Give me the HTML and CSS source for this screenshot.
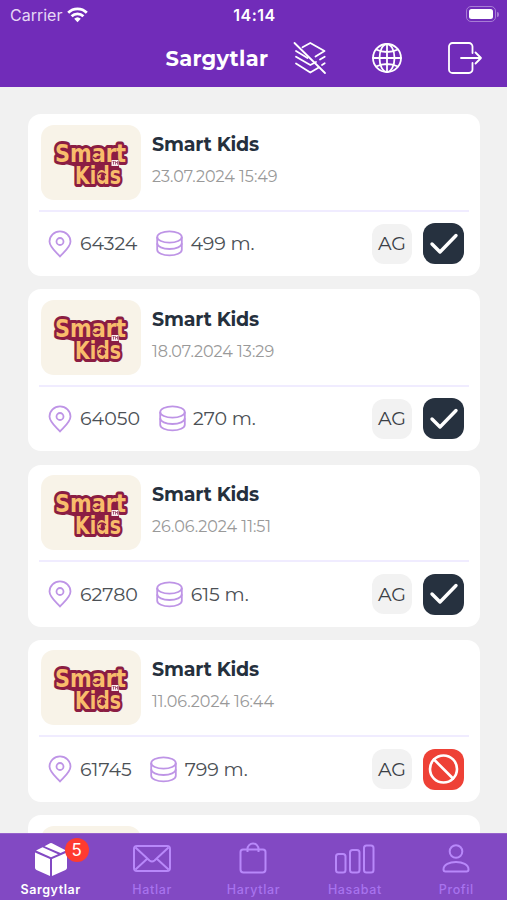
FILE: index.html
```
<!DOCTYPE html>
<html lang="tk">

<head>
    <meta charset="utf-8">
    <meta name="viewport" content="width=device-width, initial-scale=1">
    <title>Sargytlar</title>
    <link rel="stylesheet" href="styles.css">
</head>

<body>
    <svg class="defs">
        <symbol id="logo" viewBox="0 0 100 75">
            <path d="M16 20h12l14 2h40v14l-4 4v17H36V42L17 37Z" fill="#8b1d43" />
            <g class="logo-text">
                <text x="34" y="58.500" font-size="24" textLength="46" lengthAdjust="spacingAndGlyphs">Kids</text>
                <text x="14" y="36.500" font-size="25" textLength="71" lengthAdjust="spacingAndGlyphs">Smart</text>
            </g>
            <g fill="none" stroke="#8b1d43" stroke-width="1.2">
                <path d="M51 29q4-4 8 0M52 32q3 3 6 0M57 50q4-4 8 0M58 53q3 3 6 0" />
            </g>
            <rect x="70.500" y="35" width="7" height="6" fill="#f9eef0" />
            <path d="M71.500 36.500h2.200M72.500 36.500v3M74.500 39.500v-3l1 1.300 1-1.300v3" fill="none" stroke="#8b1d43" stroke-width=".7" />
        </symbol>
        <symbol id="pin" viewBox="0 0 24 28">
            <path d="M12 26.500C8 22 1.500 17 1.500 11.500a10.500 10.200 0 0 1 21 0C22.500 17 16 22 12 26.500Z" />
            <circle cx="12" cy="11.500" r="3.500" />
        </symbol>
        <symbol id="coins" viewBox="0 0 27 27">
            <ellipse cx="13.500" cy="7" rx="12.300" ry="5.700" />
            <path d="M1.200 7v6.300c0 3.200 5.500 5.700 12.300 5.700s12.300-2.500 12.300-5.700V7" />
            <path d="M1.200 13.300v6.400c0 3.200 5.500 5.700 12.300 5.700s12.300-2.500 12.300-5.700v-6.400" />
        </symbol>
        <symbol id="check" viewBox="0 0 40 40">
            <path d="M8 20l8 8L32 11.500" />
        </symbol>
        <symbol id="ban" viewBox="0 0 40 40">
            <circle cx="19.500" cy="20" r="13.500" />
            <path d="M10 10.500l19 19" />
        </symbol>
    </svg>

    <header>
        <div class="status-bar">
            <div class="carrier">Carrier
                <svg width="21" height="16" viewBox="0 0 21 16" stroke="#fff" stroke-width="2.800">
                    <path d="M1.200 5.800a13.200 13.200 0 0 1 18.600 0M4.600 9.300a8.400 8.400 0 0 1 11.800 0" />
                    <path class="solid" d="M10.500 15.200L7.200 11.800a4.800 4.800 0 0 1 6.600 0Z" />
                </svg>
            </div>
            <div class="clock">14:14</div>
            <div class="battery-wrap"><span class="battery"><i></i></span><span class="battery-tip"></span></div>
        </div>
        <div class="nav-bar">
            <h1>Sargytlar</h1>
            <svg class="nav-layers" width="34" height="34" viewBox="0 0 34 34">
                <path d="M9.500 6.300L17.300 2l14.200 8-9 5.500M3 10l11.500 7" />
                <path d="M3 15.700L17.300 24l5.700-3M31.700 15.700l-4.700 2.800M3 22.500l14.300 9 8-4.700M31.700 22.300l-2.700 1.700" />
                <path d="M1.500 2l30.500 30" />
            </svg>
            <svg class="nav-globe" width="32" height="32" viewBox="0 0 32 32">
                <circle cx="16" cy="16" r="14" />
                <ellipse cx="16" cy="16" rx="7.500" ry="14" />
                <path d="M16 2v28M2 16h28M5 7.500q11 5 22 0M5 24.500q11-5 22 0" />
            </svg>
            <svg class="nav-exit" width="36" height="34" viewBox="0 0 36 34">
                <path d="M25.500 12V5.500a3.500 3.500 0 0 0-3.500-3.500H5.500A3.500 3.500 0 0 0 2 5.500v23A3.500 3.500 0 0 0 5.500 32H22a3.500 3.500 0 0 0 3.500-3.500V22" />
                <path d="M14 17h20M28.500 11.500l5.500 5.500-5.500 5.500" />
            </svg>
        </div>
    </header>

    <main>
        <div class="card">
            <div class="shop">
                <svg class="thumb"><use href="#logo" /></svg>
                <div>
                    <h2>Smart Kids</h2>
                    <p>23.07.2024 15:49</p>
                </div>
            </div>
            <div class="order">
                <svg class="pin"><use href="#pin" /></svg>
                <span class="number">64324</span>
                <svg class="coins"><use href="#coins" /></svg>
                <span class="price">499 m.</span>
                <span class="tag">AG</span>
                <span class="state"><svg><use href="#check" /></svg></span>
            </div>
        </div>

        <div class="card">
            <div class="shop">
                <svg class="thumb"><use href="#logo" /></svg>
                <div>
                    <h2>Smart Kids</h2>
                    <p>18.07.2024 13:29</p>
                </div>
            </div>
            <div class="order">
                <svg class="pin"><use href="#pin" /></svg>
                <span class="number">64050</span>
                <svg class="coins"><use href="#coins" /></svg>
                <span class="price">270 m.</span>
                <span class="tag">AG</span>
                <span class="state"><svg><use href="#check" /></svg></span>
            </div>
        </div>

        <div class="card">
            <div class="shop">
                <svg class="thumb"><use href="#logo" /></svg>
                <div>
                    <h2>Smart Kids</h2>
                    <p>26.06.2024 11:51</p>
                </div>
            </div>
            <div class="order">
                <svg class="pin"><use href="#pin" /></svg>
                <span class="number">62780</span>
                <svg class="coins"><use href="#coins" /></svg>
                <span class="price">615 m.</span>
                <span class="tag">AG</span>
                <span class="state"><svg><use href="#check" /></svg></span>
            </div>
        </div>

        <div class="card">
            <div class="shop">
                <svg class="thumb"><use href="#logo" /></svg>
                <div>
                    <h2>Smart Kids</h2>
                    <p>11.06.2024 16:44</p>
                </div>
            </div>
            <div class="order">
                <svg class="pin"><use href="#pin" /></svg>
                <span class="number">61745</span>
                <svg class="coins"><use href="#coins" /></svg>
                <span class="price">799 m.</span>
                <span class="tag">AG</span>
                <span class="state cancelled"><svg><use href="#ban" /></svg></span>
            </div>
        </div>

        <div class="card">
            <div class="shop">
                <svg class="thumb"></svg>
            </div>
        </div>
    </main>

    <nav class="tabs">
        <a class="active">
            <span class="tab-icon">
                <svg width="34" height="36" viewBox="0 0 34 36">
                    <path d="M1 11.500l15 6.500v17L2.500 29A2.500 2.500 0 0 1 1 26.500ZM33 11.500L18 18v17l13.500-6a2.500 2.500 0 0 0 1.500-2.500Z" />
                    <path d="M2 9.500L8.500 6.200 24 13.200 17 16.300ZM10.500 5.200L16 2.200q1-.5 2 0L32 9.500l-5.500 2.600Z" />
                </svg>
                <b class="badge">5</b>
            </span>
            Sargytlar
        </a>
        <a>
            <span class="tab-icon">
                <svg width="40" height="36" viewBox="0 0 40 36">
                    <rect x="2" y="5" width="36" height="25" rx="3" />
                    <path d="M3.500 6.500l14 13q2.500 2 5 0l14-13M3.500 28.500l12-11M36.500 28.500l-12-11" />
                </svg>
            </span>
            Hatlar
        </a>
        <a>
            <span class="tab-icon">
                <svg width="30" height="36" viewBox="0 0 30 36">
                    <path d="M5 8.500h20q2.500 0 2.500 2.500v17.500q0 3-3 3h-19q-3 0-3-3V11q0-2.500 2.500-2.500Z" />
                    <path d="M9.500 11V8a5.500 5.500 0 0 1 11 0v3" />
                </svg>
            </span>
            Harytlar
        </a>
        <a>
            <span class="tab-icon">
                <svg width="42" height="36" viewBox="0 0 42 36">
                    <rect x="2" y="13" width="9.500" height="18.500" rx="2.500" />
                    <rect x="16" y="9" width="9.500" height="22.500" rx="2.500" />
                    <rect x="30" y="4.500" width="9.500" height="27" rx="2.500" />
                </svg>
            </span>
            Hasabat
        </a>
        <a>
            <span class="tab-icon">
                <svg width="30" height="36" viewBox="0 0 30 36">
                    <circle cx="15" cy="10.500" r="6.300" />
                    <path d="M2.500 28.500c0-5 6-7.500 12.500-7.500s12.500 2.500 12.500 7.500q0 2-2 2h-21q-2 0-2-2Z" />
                </svg>
            </span>
            Profil
        </a>
    </nav>
</body>

</html>
```
FILE: styles.css
```
* {
    box-sizing: border-box;
}

body {
    margin: 0;
    height: 900px;
    display: flex;
    flex-direction: column;
    overflow: hidden;
    background: #f1f1f1;
    font-family: Montserrat, Inter, "Liberation Sans", sans-serif;
}

svg {
    fill: none;
    flex: none;
}

.defs {
    position: absolute;
    width: 0;
    height: 0;
}

.solid {
    fill: #fff;
    stroke: none;
}

header {
    flex: none;
    height: 87px;
    background: #712cb9;
    color: #fff;
}

.status-bar {
    display: grid;
    grid-template-columns: 1fr auto 1fr;
    align-items: center;
    height: 30px;
    padding: 0 8px 0 10px;
    font-family: Inter, "Liberation Sans", sans-serif;
    font-size: 16px;
}

.carrier {
    display: flex;
    align-items: center;
    gap: 5px;
    color: #e6d7f5;
}

.carrier svg {
    margin-top: -1px;
}

.clock {
    font-weight: 600;
    letter-spacing: 0.5px;
}

.battery-wrap {
    display: flex;
    align-items: center;
    justify-content: flex-end;
    gap: 1px;
    margin-top: -2px;
}

.battery {
    width: 30px;
    height: 16px;
    padding: 2px;
    border: 1px solid #a77cd5;
    border-radius: 5px;
}

.battery i {
    display: block;
    height: 10px;
    border-radius: 2.5px;
    background: #fff;
}

.battery-tip {
    width: 2px;
    height: 5px;
    border-radius: 0 2px 2px 0;
    background: #a77cd5;
}

.nav-bar {
    display: flex;
    align-items: center;
    height: 56px;
    padding-left: 165.5px;
}

.nav-bar h1 {
    width: 102.5px;
    margin: 0;
    font-size: 21px;
    font-weight: 700;
    letter-spacing: 0.3px;
    white-space: nowrap;
}

.nav-bar svg {
    stroke: #fff;
    stroke-width: 1.8;
    stroke-linecap: round;
    stroke-linejoin: round;
}

.nav-layers {
    margin-left: 25px;
}

.nav-globe {
    margin-left: 43.5px;
}

.nav-exit {
    margin-left: 44px;
}

main {
    flex: 1;
    min-height: 0;
    overflow: hidden;
    display: flex;
    flex-direction: column;
    gap: 13.3px;
    padding: 27px 27px 0 28px;
}

.card {
    flex: none;
    height: 162px;
    padding: 10.5px 11px 0;
    border-radius: 13px;
    background: #fff;
}

.shop {
    display: flex;
    gap: 11px;
    height: 87px;
    padding-left: 2px;
    border-bottom: 2px solid #f0ecff;
}

.thumb {
    width: 100px;
    height: 75px;
    border-radius: 13px;
    background: #f8f3e8;
}

.logo-text {
    font-family: "DejaVu Sans", sans-serif;
    font-weight: bold;
    fill: #f8bd6c;
    stroke: #8b1d43;
    stroke-width: 6;
    stroke-linejoin: round;
    paint-order: stroke;
}

.shop h2 {
    margin: 8px 0 0;
    font-size: 19px;
    line-height: 24px;
    font-weight: 700;
    letter-spacing: -0.2px;
    color: #25303d;
}

.shop p {
    margin: 10px 0 0;
    font-size: 16px;
    line-height: 20px;
    color: #999;
}

.order {
    display: flex;
    align-items: center;
    height: 64px;
    padding: 0 5px 0 8.5px;
    font-size: 19px;
    color: #4b5055;
}

.pin,
.coins {
    stroke: #be94e6;
    stroke-width: 1.8;
}

.pin {
    width: 24px;
    height: 28px;
}

.number {
    margin-left: 8.5px;
}

.coins {
    width: 27px;
    height: 27px;
    margin-left: 18.5px;
}

.price {
    margin-left: 7.5px;
    letter-spacing: -0.1px;
}

.tag,
.state {
    display: flex;
    align-items: center;
    justify-content: center;
    width: 40px;
    height: 40px;
    border-radius: 12px;
}

.tag {
    margin-left: auto;
    background: #f2f2f2;
    color: #3b4046;
}

.state {
    width: 41px;
    height: 41px;
    margin-left: 11px;
    background: #26313f;
}

.state svg {
    width: 40px;
    height: 40px;
    stroke: #fff;
    stroke-width: 3.4;
    stroke-linecap: round;
    stroke-linejoin: round;
}

.state.cancelled {
    background: #ee4136;
}

.cancelled svg {
    stroke-width: 2.6;
}

.tabs {
    flex: none;
    display: grid;
    grid-template-columns: repeat(5, 1fr);
    height: 67px;
    border-top: 1px solid #9663cb;
    background: #8249c3;
}

.tabs a {
    display: flex;
    flex-direction: column;
    align-items: center;
    padding-top: 7px;
    font-family: Inter, "Liberation Sans", sans-serif;
    font-size: 12.5px;
    line-height: 16px;
    font-weight: 500;
    letter-spacing: 0.65px;
    color: #a873ee;
}

.tabs a.active {
    color: #fff;
    font-weight: 600;
    letter-spacing: 0.55px;
}

.tab-icon {
    position: relative;
    height: 41px;
}

.tab-icon svg {
    display: block;
    stroke: #b888fa;
    stroke-width: 2;
    stroke-linejoin: round;
}

.active .tab-icon svg {
    fill: #fff;
    stroke: none;
}

.badge {
    position: absolute;
    top: -3px;
    left: 31px;
    width: 24px;
    height: 24px;
    border-radius: 50%;
    background: #fe3b30;
    font-size: 17px;
    line-height: 24px;
    font-weight: 400;
    letter-spacing: 0;
    text-align: center;
}
```
